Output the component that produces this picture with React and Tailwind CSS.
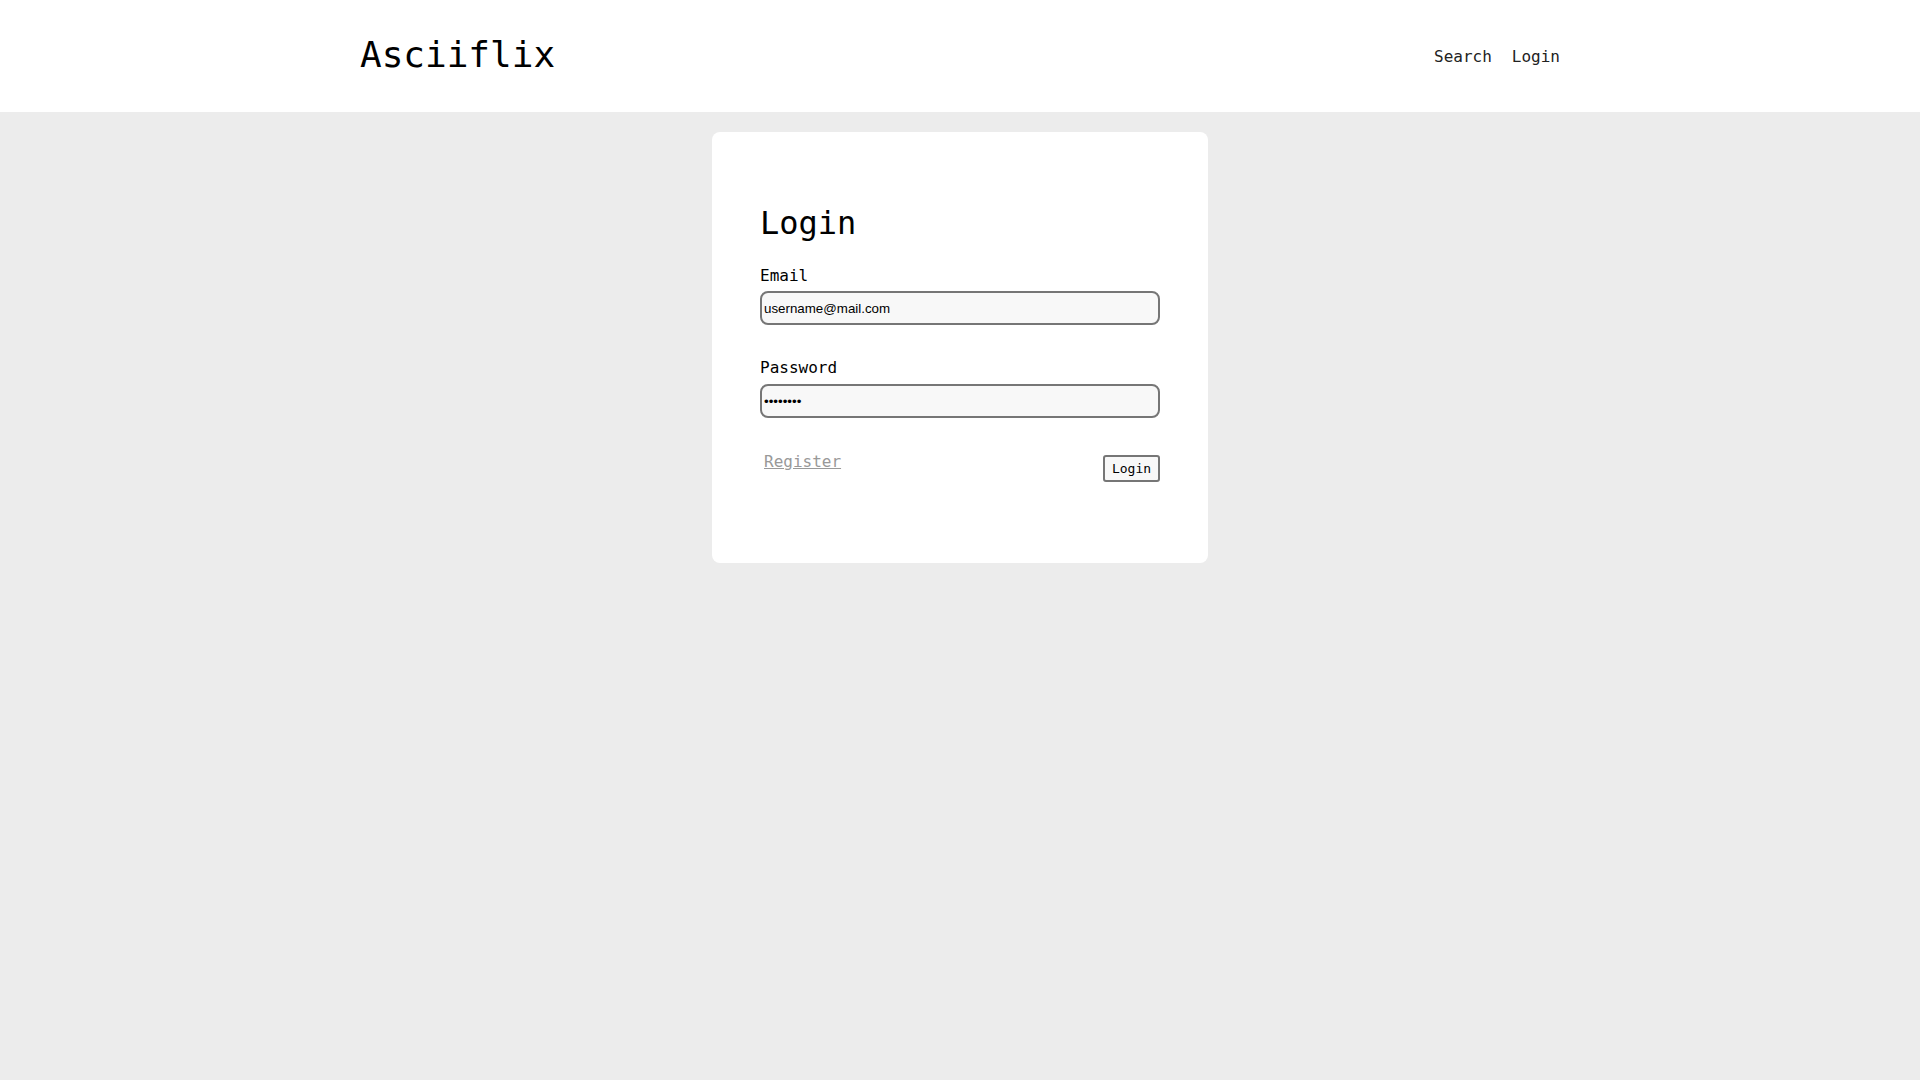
import React from 'react';

const mono = { fontFamily: '"DejaVu Sans Mono", "Liberation Mono", monospace' };

export default function App() {
  return (
    <div className="min-h-screen bg-[#ececec] text-black" style={mono}>
      {/* Header */}
      <header className="bg-white h-[112px]">
        <div className="max-w-[1200px] mx-auto h-full flex items-center justify-between">
          <a href="#" className="text-[36px] leading-[44px] -mt-[2px] text-black">Asciiflix</a>
          <nav className="flex items-center gap-5 mt-[2px] text-[16px] text-[#222]">
            <a href="#">Search</a>
            <a href="#">Login</a>
          </nav>
        </div>
      </header>

      {/* Login card */}
      <main className="pt-5">
        <div className="mx-auto w-[496px] h-[431px] bg-white rounded-lg px-12 pt-[71px]">
          <h1 className="text-[32px] leading-[40px]">Login</h1>

          <form onSubmit={(e) => e.preventDefault()}>
            <label className="block mt-[23px] text-[16px] leading-[20px]">Email</label>
            <input
              type="email"
              defaultValue="username@mail.com"
              className="block mt-[5px] w-full h-[34px] border-2 border-[#767676] rounded-[8px] bg-[#f8f8f8] px-[2px] text-[13.33px] text-black outline-none"
              style={{ fontFamily: '"Liberation Sans", Arial, sans-serif' }}
            />

            <label className="block mt-[33px] text-[16px] leading-[20px]">Password</label>
            <input
              type="password"
              defaultValue="password"
              className="block mt-[6px] w-full h-[34px] border-2 border-[#767676] rounded-[8px] bg-[#f8f8f8] px-[2px] text-[13.33px] text-black outline-none"
              style={{ fontFamily: '"Liberation Sans", Arial, sans-serif' }}
            />

            <div className="mt-[34px] flex items-start justify-between">
              <a href="#" className="ml-1 text-[16px] leading-[20px] text-[#999] underline">Register</a>
              <button
                type="submit"
                className="mt-[3px] h-[27px] w-[57px] border-2 border-[#767676] rounded-[3px] bg-[#f8f8f8] text-[13px] leading-none text-black"
              >
                Login
              </button>
            </div>
          </form>
        </div>
      </main>
    </div>
  );
}
